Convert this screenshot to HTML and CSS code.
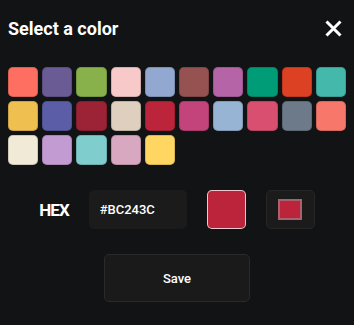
FILE: index.html
```html
<!DOCTYPE html>
<html>
<head>
  <meta charset="UTF-8">
  <title>Select a color</title>
  <link rel="stylesheet" href="styles.css">
</head>
<body>

  <div class="picker">
    <div class="header">
      <h2>Select a color</h2>
      <button class="close" aria-label="Close">
        <svg width="17" height="17" viewBox="0 0 17 17">
          <path d="M1.5 1.5 L15.5 15.5 M15.5 1.5 L1.5 15.5" stroke="#fff" stroke-width="3" stroke-linecap="butt"/>
        </svg>
      </button>
    </div>

    <div class="swatches" id="swatches"></div>

    <div class="hex-row">
      <span class="hex-label">HEX</span>
      <input type="text" class="hex-input" id="hexInput" value="#BC243C">
      <div class="preview" id="preview"></div>
      <button class="native-picker"><span class="native-swatch" id="nativeSwatch"></span></button>
    </div>

    <button class="save">Save</button>
  </div>

  <script>
    const colors = [
      "#FF6F61", "#6B5B95", "#88B04B", "#F7CAC9", "#92A8D1", "#955251", "#B565A7", "#009B77", "#DD4124", "#45B8AC",
      "#EFC050", "#5B5EA6", "#9B2335", "#DFCFBE", "#BC243C", "#C3447A", "#98B4D4", "#D94F70", "#6C7A89", "#F7786B",
      "#F0EAD6", "#C39BD3", "#7FCDCD", "#D8A7C0", "#FFD662"
    ];

    function setColor(hex) {
      document.getElementById("hexInput").value = hex;
      document.getElementById("preview").style.background = hex;
      document.getElementById("nativeSwatch").style.background = hex;
    }

    const grid = document.getElementById("swatches");
    colors.forEach(c => {
      const s = document.createElement("div");
      s.className = "swatch";
      s.style.background = c;
      s.onclick = () => setColor(c);
      grid.appendChild(s);
    });

    setColor("#BC243C");
  </script>

</body>
</html>
```

FILE: styles.css
```css
body {
  margin: 0;
  background-color: #121315;
  font-family: Roboto, "Noto Sans", sans-serif;
  color: #fff;
}

.picker {
  padding: 0 8px;
}

.header {
  display: flex;
  justify-content: space-between;
  align-items: center;
  height: 56px;
}

.header h2 {
  margin: 0;
  font-size: 18px;
  font-weight: 700;
}

.close {
  background: none;
  border: none;
  padding: 0;
  margin-right: 4px;
  width: 17px;
  height: 17px;
  cursor: pointer;
}

.swatches {
  display: grid;
  grid-template-columns: repeat(10, 1fr);
  grid-auto-rows: 30px;
  gap: 4px;
  margin-top: 11px;
}

.swatch {
  border-radius: 5px;
  box-shadow: inset 0 0 0 1px rgba(0, 0, 0, 0.15);
  cursor: pointer;
}

.hex-row {
  display: flex;
  justify-content: center;
  align-items: center;
  gap: 20px;
  margin-top: 25px;
}

.hex-label {
  font-size: 17px;
  font-weight: 700;
  letter-spacing: -1px;
}

.hex-input {
  width: 98px;
  height: 39px;
  box-sizing: border-box;
  padding: 0 11px;
  background-color: #1b1b1c;
  border: none;
  border-radius: 5px;
  color: #fff;
  font-family: Roboto, sans-serif;
  font-size: 13px;
  font-weight: 500;
  outline: none;
}

.preview {
  width: 39px;
  height: 39px;
  box-sizing: border-box;
  border: 1px solid rgba(255, 255, 255, 0.75);
  border-radius: 5px;
}

.native-picker {
  width: 49px;
  height: 39px;
  box-sizing: border-box;
  display: flex;
  align-items: center;
  justify-content: center;
  background-color: #1b1b1c;
  border: 1px solid #262627;
  border-radius: 5px;
  padding: 0;
  cursor: pointer;
}

.native-swatch {
  width: 24px;
  height: 21px;
  box-sizing: border-box;
  border: 2px solid rgba(150, 150, 150, 0.55);
}

.save {
  display: block;
  margin: 25px auto 0;
  width: 146px;
  height: 48px;
  background-color: #1a1a1b;
  border: 1px solid #2a2a2b;
  border-radius: 5px;
  color: #fff;
  font-family: Roboto, sans-serif;
  font-size: 13px;
  font-weight: 500;
  cursor: pointer;
}
```
